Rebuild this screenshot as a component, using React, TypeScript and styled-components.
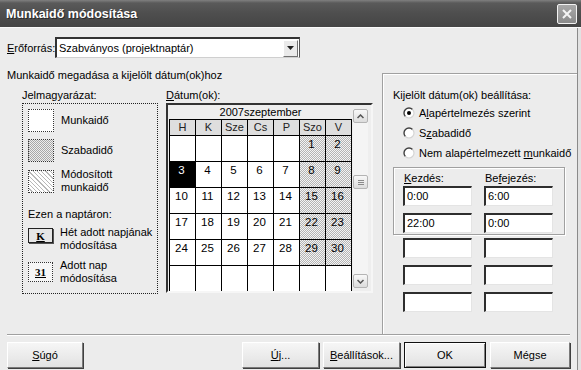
import React from "react";
import styled, { createGlobalStyle } from "styled-components";

const GlobalStyle = createGlobalStyle`
  html, body {
    margin: 0;
    padding: 0;
    background: #ececec;
  }
  body {
    font-family: "Liberation Sans", Arial, sans-serif;
    font-size: 11px;
  }
`;

const weeks: (number | null)[][] = [
  [null, null, null, null, null, 1, 2],
  [3, 4, 5, 6, 7, 8, 9],
  [10, 11, 12, 13, 14, 15, 16],
  [17, 18, 19, 20, 21, 22, 23],
  [24, 25, 26, 27, 28, 29, 30],
  [null, null, null, null, null, null, null],
];

const dayNames = ["H", "K", "Sze", "Cs", "P", "Szo", "V"];

const Window = styled.div`
  width: 581px;
  height: 370px;
  overflow: hidden;
  display: flex;
  flex-direction: column;
  background: #e2e2e2;
  color: #000;
  font-family: "Liberation Sans", Arial, sans-serif;
  font-size: 11px;
`;

const TitleBar = styled.div`
  height: 27px;
  flex-shrink: 0;
  display: flex;
  align-items: center;
  justify-content: space-between;
  padding: 0 4px 0 6px;
  background: linear-gradient(#808080 0, #5a5a5a 3px, #4e4e4e 50%, #454545 100%);
  border-bottom: 1px solid #fafafa;
`;

const Title = styled.span`
  color: #fff;
  font-weight: bold;
  font-size: 12.5px;
  text-shadow: 1px 1px 0 #2a2a2a;
`;

const CloseButton = styled.div`
  width: 20px;
  height: 20px;
  box-sizing: border-box;
  border: 1px solid #f2f2f2;
  border-radius: 2px;
  background: linear-gradient(#a8a8a8, #8a8a8a);
  display: flex;
  align-items: center;
  justify-content: center;
`;

const Body = styled.div`
  flex: 1;
  display: flex;
  flex-direction: column;
  padding: 9px 0 0 7px;
  margin-right: 3px;
  border-right: 1px solid #8a8a8a;
  background: #ececec;
`;

const ResourceRow = styled.div`
  display: flex;
  align-items: center;
  height: 21px;
`;

const ResourceLabel = styled.span`
  width: 48px;
`;

const Select = styled.div`
  width: 245px;
  height: 21px;
  box-sizing: border-box;
  background: #fff;
  border-top: 2px solid #333;
  border-left: 2px solid #333;
  border-right: 1px solid #555;
  border-bottom: 1px solid #cfcfcf;
  display: flex;
  align-items: center;
  padding-left: 2px;
`;

const SelectText = styled.span`
  flex: 1;
`;

const DropButton = styled.div`
  width: 15px;
  height: 17px;
  margin-right: 1px;
  box-sizing: border-box;
  background: #eaeaea;
  border: 1px solid;
  border-color: #fff #707070 #707070 #fff;
  display: flex;
  align-items: center;
  justify-content: center;
`;

const MainArea = styled.div`
  display: flex;
  height: 265px;
  margin-top: 11px;
`;

const LeftArea = styled.div`
  width: 375px;
  display: flex;
  flex-direction: column;
`;

const Heading = styled.div`
  line-height: 13px;
  height: 13px;
`;

const Columns = styled.div`
  display: flex;
  gap: 8px;
  margin-top: 7px;
  padding-left: 15px;
`;

const Column = styled.div<{ $width: number }>`
  width: ${(p) => p.$width}px;
  display: flex;
  flex-direction: column;
`;

const FieldLabel = styled.div`
  line-height: 13px;
  margin-bottom: 1px;
`;

const U = styled.span`
  text-decoration: underline;
`;

const LegendBox = styled.div`
  height: 191px;
  box-sizing: border-box;
  border: 1px dotted #222;
  padding: 5px 4px 0 5px;
  display: flex;
  flex-direction: column;
`;

const LegendItem = styled.div<{ $top: number; $align?: string }>`
  display: flex;
  align-items: ${(p) => p.$align || "center"};
  gap: 7px;
  margin-top: ${(p) => p.$top}px;
`;

const LegendText = styled.div`
  line-height: 13px;
`;

const Swatch = styled.div<{ $kind: "work" | "free" | "changed" }>`
  width: 26px;
  height: 23px;
  flex-shrink: 0;
  box-sizing: border-box;
  border: 1px dotted #333;
  background: ${(p) =>
    p.$kind === "work"
      ? "#fff"
      : p.$kind === "free"
      ? "repeating-conic-gradient(#a8a8a8 0 25%, #eeeeee 0 50%) 0 0 / 2px 2px"
      : "repeating-linear-gradient(45deg, #fff 0 2px, #b8b8b8 2px 3px)"};
`;

const Caption = styled.div`
  line-height: 13px;
  margin-top: 14px;
`;

const KeyBox = styled.div<{ $dotted?: boolean }>`
  width: 25px;
  height: ${(p) => (p.$dotted ? 20 : 15)}px;
  flex-shrink: 0;
  box-sizing: border-box;
  border: 1px ${(p) => (p.$dotted ? "dotted #333" : "solid #222")};
  box-shadow: ${(p) => (p.$dotted ? "none" : "1px 1px 0 #555")};
  background: ${(p) => (p.$dotted ? "#f6f6f6" : "#e6e6e6")};
  display: flex;
  align-items: center;
  justify-content: center;
  font-family: "Liberation Serif", "Times New Roman", serif;
  font-weight: bold;
  font-size: 11px;
  text-decoration: underline;
  margin-top: ${(p) => (p.$dotted ? 0 : 2)}px;
`;

const CalendarFrame = styled.div`
  width: 207px;
  height: 190px;
  box-sizing: border-box;
  border: 2px solid;
  border-color: #333 #f6f6f6 #f6f6f6 #333;
  background: #eeeeee;
  display: flex;
  padding-left: 1px;
  overflow: hidden;
`;

const CalendarMain = styled.div`
  width: 183px;
  display: flex;
  flex-direction: column;
`;

const MonthTitle = styled.div`
  height: 14px;
  line-height: 14px;
  text-align: center;
`;

const DayGrid = styled.div`
  display: grid;
  grid-template-columns: repeat(7, 25px);
  grid-template-rows: 15px repeat(6, 25px);
  gap: 1px;
  padding: 1px 1px 0 1px;
  background: #000;
`;

const DayHead = styled.div`
  background: #dedede;
  text-align: center;
  line-height: 15px;
  color: #222;
`;

const DayCell = styled.div<{ $weekend: boolean; $selected: boolean }>`
  background: ${(p) =>
    p.$selected
      ? "#000"
      : p.$weekend
      ? "repeating-conic-gradient(#b4b4b4 0 25%, #f4f4f4 0 50%) 0 0 / 2px 2px"
      : "#fff"};
  color: ${(p) => (p.$selected ? "#fff" : "#000")};
  text-align: center;
  padding: 2px 2px 0 0;
  line-height: 13px;
  font-size: 11.5px;
`;

const Scrollbar = styled.div`
  width: 15px;
  margin: 4px 0 3px 1px;
  display: flex;
  flex-direction: column;
  background: #f4f4f4;
`;

const ScrollButton = styled.div`
  width: 15px;
  height: 14px;
  box-sizing: border-box;
  border: 1px solid #b4b4b4;
  border-radius: 2px;
  background: linear-gradient(#f8f8f8, #dcdcdc);
  display: flex;
  align-items: center;
  justify-content: center;
`;

const ScrollTrack = styled.div`
  flex: 1;
  padding-top: 52px;
`;

const Thumb = styled(ScrollButton)`
  flex-direction: column;
  gap: 1px;
`;

const GripLine = styled.div`
  width: 6px;
  height: 1px;
  background: #8a8a8a;
`;

const RightPanel = styled.div`
  flex: 1;
  margin-top: 4px;
  border-top: 1px solid #a0a0a0;
  border-left: 1px solid #a0a0a0;
  box-shadow: inset 1px 1px 0 #fff;
  padding: 15px 0 0 10px;
  display: flex;
  flex-direction: column;
`;

const PanelLabel = styled.div`
  line-height: 13px;
`;

const RadioList = styled.div`
  margin-top: 1px;
  display: flex;
  flex-direction: column;
`;

const RadioRow = styled.div`
  height: 20px;
  display: flex;
  align-items: center;
  gap: 4px;
  padding-left: 10px;
`;

const InnerGroup = styled.div`
  width: 172px;
  box-sizing: border-box;
  margin-top: 4px;
  border: 1px solid #a0a0a0;
  box-shadow: inset 1px 1px 0 #fff, 1px 1px 0 #fff;
  padding: 4px 0 1px 9px;
`;

const TimeGrid = styled.div<{ $top?: number; $pad?: number }>`
  display: grid;
  grid-template-columns: 69px 69px;
  column-gap: 12px;
  row-gap: 7px;
  margin-top: ${(p) => p.$top || 0}px;
  padding-left: ${(p) => p.$pad || 0}px;
`;

const TimeLabel = styled.div`
  line-height: 13px;
  padding-left: 1px;
  margin-bottom: -6px;
`;

const TimeInput = styled.div`
  width: 69px;
  height: 20px;
  box-sizing: border-box;
  background: #fff;
  border-top: 2px solid #2e2e2e;
  border-left: 2px solid #2e2e2e;
  border-right: 1px solid #e4e4e4;
  border-bottom: 1px solid #e4e4e4;
  padding-left: 2px;
  line-height: 17px;
`;

const Separator = styled.div`
  margin-right: 7px;
  border-top: 1px solid #a0a0a0;
  border-bottom: 1px solid #fff;
`;

const ButtonRow = styled.div`
  display: flex;
  margin-top: 6px;
  padding-right: 7px;
`;

const Spacer = styled.div`
  flex: 1;
`;

const ButtonGroup = styled.div`
  display: flex;
  gap: 4px;
`;

const Button = styled.div<{ $width: number; $default?: boolean }>`
  width: ${(p) => p.$width}px;
  height: 26px;
  box-sizing: border-box;
  display: flex;
  align-items: center;
  justify-content: center;
  background: linear-gradient(#f6f6f6, #e2e2e2);
  border: 1px solid;
  border-color: ${(p) => (p.$default ? "#111" : "#fff #7a7a7a #7a7a7a #fff")};
  box-shadow: ${(p) =>
    p.$default
      ? "inset 1px 1px 0 #fff, inset -1px -1px 0 #808080"
      : "1px 1px 0 #404040"};
`;

const Radio = ({ checked }: { checked?: boolean }) => (
  <svg width="12" height="12" viewBox="0 0 12 12">
    <circle cx="6" cy="6" r="5" fill="#fff" />
    <path d="M2.46 9.54 A5 5 0 0 1 9.54 2.46" fill="none" stroke="#404040" strokeWidth="1.4" />
    <path d="M9.54 2.46 A5 5 0 0 1 2.46 9.54" fill="none" stroke="#d4d4d4" strokeWidth="1.2" />
    {checked && <circle cx="6" cy="6" r="2" fill="#000" />}
  </svg>
);

const Chevron = ({ up }: { up?: boolean }) => (
  <svg width="7" height="5" viewBox="0 0 7 5">
    <path
      d={up ? "M0.5 4 L3.5 1 L6.5 4" : "M0.5 1 L3.5 4 L6.5 1"}
      fill="none"
      stroke="#555"
      strokeWidth="1.5"
    />
  </svg>
);

export default function App() {
  return (
    <>
      <GlobalStyle />
      <Window>
        <TitleBar>
          <Title>Munkaidő módosítása</Title>
          <CloseButton>
            <svg width="10" height="10" viewBox="0 0 10 10">
              <path d="M1 1 L9 9 M9 1 L1 9" stroke="#f4f4f4" strokeWidth="2" />
            </svg>
          </CloseButton>
        </TitleBar>
        <Body>
          <ResourceRow>
            <ResourceLabel>
              <U>E</U>rőforrás:
            </ResourceLabel>
            <Select>
              <SelectText>Szabványos (projektnaptár)</SelectText>
              <DropButton>
                <svg width="7" height="4" viewBox="0 0 7 4">
                  <path d="M0 0 H7 L3.5 4 Z" fill="#222" />
                </svg>
              </DropButton>
            </Select>
          </ResourceRow>

          <MainArea>
            <LeftArea>
              <Heading>Munkaidő megadása a kijelölt dátum(ok)hoz</Heading>
              <Columns>
                <Column $width={136}>
                  <FieldLabel>Jelmagyarázat:</FieldLabel>
                  <LegendBox>
                    <LegendItem $top={0}>
                      <Swatch $kind="work" />
                      <LegendText>Munkaidő</LegendText>
                    </LegendItem>
                    <LegendItem $top={7}>
                      <Swatch $kind="free" />
                      <LegendText>Szabadidő</LegendText>
                    </LegendItem>
                    <LegendItem $top={6}>
                      <Swatch $kind="changed" />
                      <LegendText>
                        Módosított
                        <br />
                        munkaidő
                      </LegendText>
                    </LegendItem>
                    <Caption>Ezen a naptáron:</Caption>
                    <LegendItem $top={5} $align="flex-start">
                      <KeyBox>K</KeyBox>
                      <LegendText>
                        Hét adott napjának
                        <br />
                        módosítása
                      </LegendText>
                    </LegendItem>
                    <LegendItem $top={7}>
                      <KeyBox $dotted>31</KeyBox>
                      <LegendText>
                        Adott nap
                        <br />
                        módosítása
                      </LegendText>
                    </LegendItem>
                  </LegendBox>
                </Column>
                <Column $width={207}>
                  <FieldLabel>
                    <U>D</U>átum(ok):
                  </FieldLabel>
                  <CalendarFrame>
                    <CalendarMain>
                      <MonthTitle>2007szeptember</MonthTitle>
                      <DayGrid>
                        {dayNames.map((d) => (
                          <DayHead key={d}>{d}</DayHead>
                        ))}
                        {weeks.map((week, wi) =>
                          week.map((day, di) => (
                            <DayCell
                              key={`${wi}-${di}`}
                              $weekend={day !== null && di >= 5}
                              $selected={day === 3}
                            >
                              {day}
                            </DayCell>
                          ))
                        )}
                      </DayGrid>
                    </CalendarMain>
                    <Scrollbar>
                      <ScrollButton>
                        <Chevron up />
                      </ScrollButton>
                      <ScrollTrack>
                        <Thumb>
                          <GripLine />
                          <GripLine />
                          <GripLine />
                        </Thumb>
                      </ScrollTrack>
                      <ScrollButton>
                        <Chevron />
                      </ScrollButton>
                    </Scrollbar>
                  </CalendarFrame>
                </Column>
              </Columns>
            </LeftArea>

            <RightPanel>
              <PanelLabel>Kijelölt dátum(ok) beállítása:</PanelLabel>
              <RadioList>
                <RadioRow>
                  <Radio checked />
                  <span>
                    A<U>l</U>apértelmezés szerint
                  </span>
                </RadioRow>
                <RadioRow>
                  <Radio />
                  <span>
                    S<U>z</U>abadidő
                  </span>
                </RadioRow>
                <RadioRow>
                  <Radio />
                  <span>
                    Nem alapértelmezett <U>m</U>unkaidő
                  </span>
                </RadioRow>
              </RadioList>
              <InnerGroup>
                <TimeGrid>
                  <TimeLabel>
                    <U>K</U>ezdés:
                  </TimeLabel>
                  <TimeLabel>
                    Be<U>f</U>ejezés:
                  </TimeLabel>
                  <TimeInput>0:00</TimeInput>
                  <TimeInput>6:00</TimeInput>
                  <TimeInput>22:00</TimeInput>
                  <TimeInput>0:00</TimeInput>
                </TimeGrid>
              </InnerGroup>
              <TimeGrid $top={3} $pad={10}>
                {Array.from({ length: 6 }).map((_, i) => (
                  <TimeInput key={i} />
                ))}
              </TimeGrid>
            </RightPanel>
          </MainArea>

          <Separator />
          <ButtonRow>
            <Button $width={76}>
              <span>
                <U>S</U>úgó
              </span>
            </Button>
            <Spacer />
            <ButtonGroup>
              <Button $width={77}>
                <span>
                  <U>Ú</U>j...
                </span>
              </Button>
              <Button $width={77}>
                <span>
                  <U>B</U>eállítások...
                </span>
              </Button>
              <Button $width={82} $default>
                OK
              </Button>
              <Button $width={80}>Mégse</Button>
            </ButtonGroup>
          </ButtonRow>
        </Body>
      </Window>
    </>
  );
}
